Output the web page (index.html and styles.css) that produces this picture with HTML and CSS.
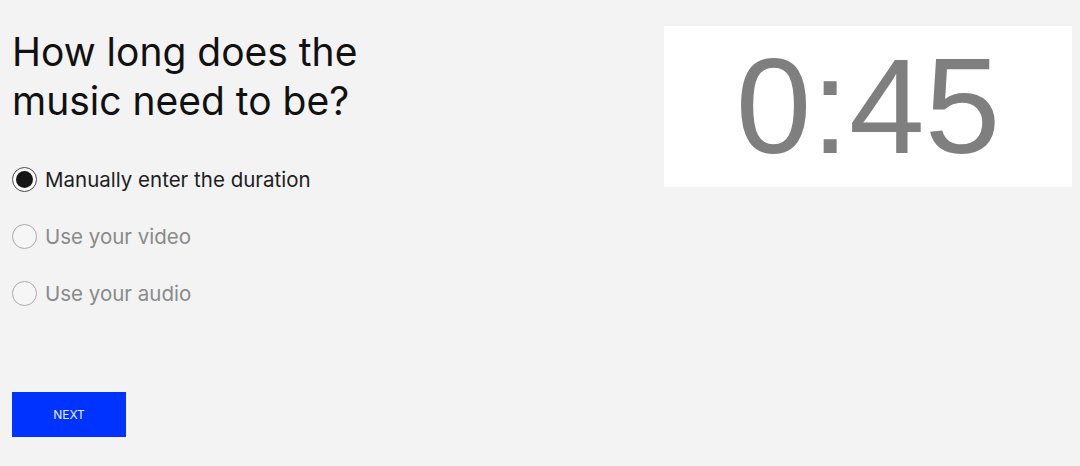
FILE: index.html
```html
<!DOCTYPE html>
<html>
<head>
<meta charset="utf-8">
<link rel="stylesheet" href="styles.css">
</head>
<body>
<div class="page">
  <div class="left">
    <h1 class="title">How long does the<br>music need to be?</h1>
    <div class="options">
      <label class="option checked"><span class="radio"><span class="dot"></span></span><span class="label">Manually enter the duration</span></label>
      <label class="option"><span class="radio"></span><span class="label">Use your video</span></label>
      <label class="option"><span class="radio"></span><span class="label">Use your audio</span></label>
    </div>
    <button class="next">NEXT</button>
  </div>
  <div class="right">
    <div class="timer">0:45</div>
  </div>
</div>
</body>
</html>
```
FILE: styles.css
```css
html, body {
  margin: 0;
  padding: 0;
  background: #f3f3f3;
}
body {
  font-family: Inter, "Noto Sans", sans-serif;
  width: 1080px;
  height: 466px;
  overflow: hidden;
}
.page {
  display: flex;
  justify-content: space-between;
  padding: 26px 8px 0 12px;
}
.left {
  display: flex;
  flex-direction: column;
}
.title {
  margin: 1px 0 0 0;
  font-weight: 400;
  font-size: 39px;
  line-height: 49px;
  color: #111;
}
.options {
  display: flex;
  flex-direction: column;
  gap: 32px;
  margin-top: 42px;
}
.option {
  display: flex;
  align-items: center;
  gap: 8px;
  height: 25px;
  font-size: 20.5px;
  color: #8a8a8a;
}
.option.checked {
  color: #1e1e1e;
}
.radio {
  box-sizing: border-box;
  width: 25px;
  height: 25px;
  border-radius: 50%;
  border: 1.5px solid #ababab;
  background: #f6f6f6;
  display: flex;
  align-items: center;
  justify-content: center;
}
.option.checked .radio {
  border: 1.5px solid #4a4a4a;
  background: #fafafa;
}
.dot {
  width: 17px;
  height: 17px;
  border-radius: 50%;
  background: #161616;
}
.next {
  margin-top: 86px;
  width: 114px;
  height: 45px;
  background: #0033ff;
  border: none;
  color: #e8ecff;
  font-family: Inter, sans-serif;
  font-size: 12px;
  padding: 0;
}
.timer {
  width: 408px;
  height: 161px;
  background: #ffffff;
  color: #7f7f7f;
  font-family: "Liberation Sans", Arial, sans-serif;
  font-size: 136px;
  line-height: 161px;
  text-align: center;
}
```
